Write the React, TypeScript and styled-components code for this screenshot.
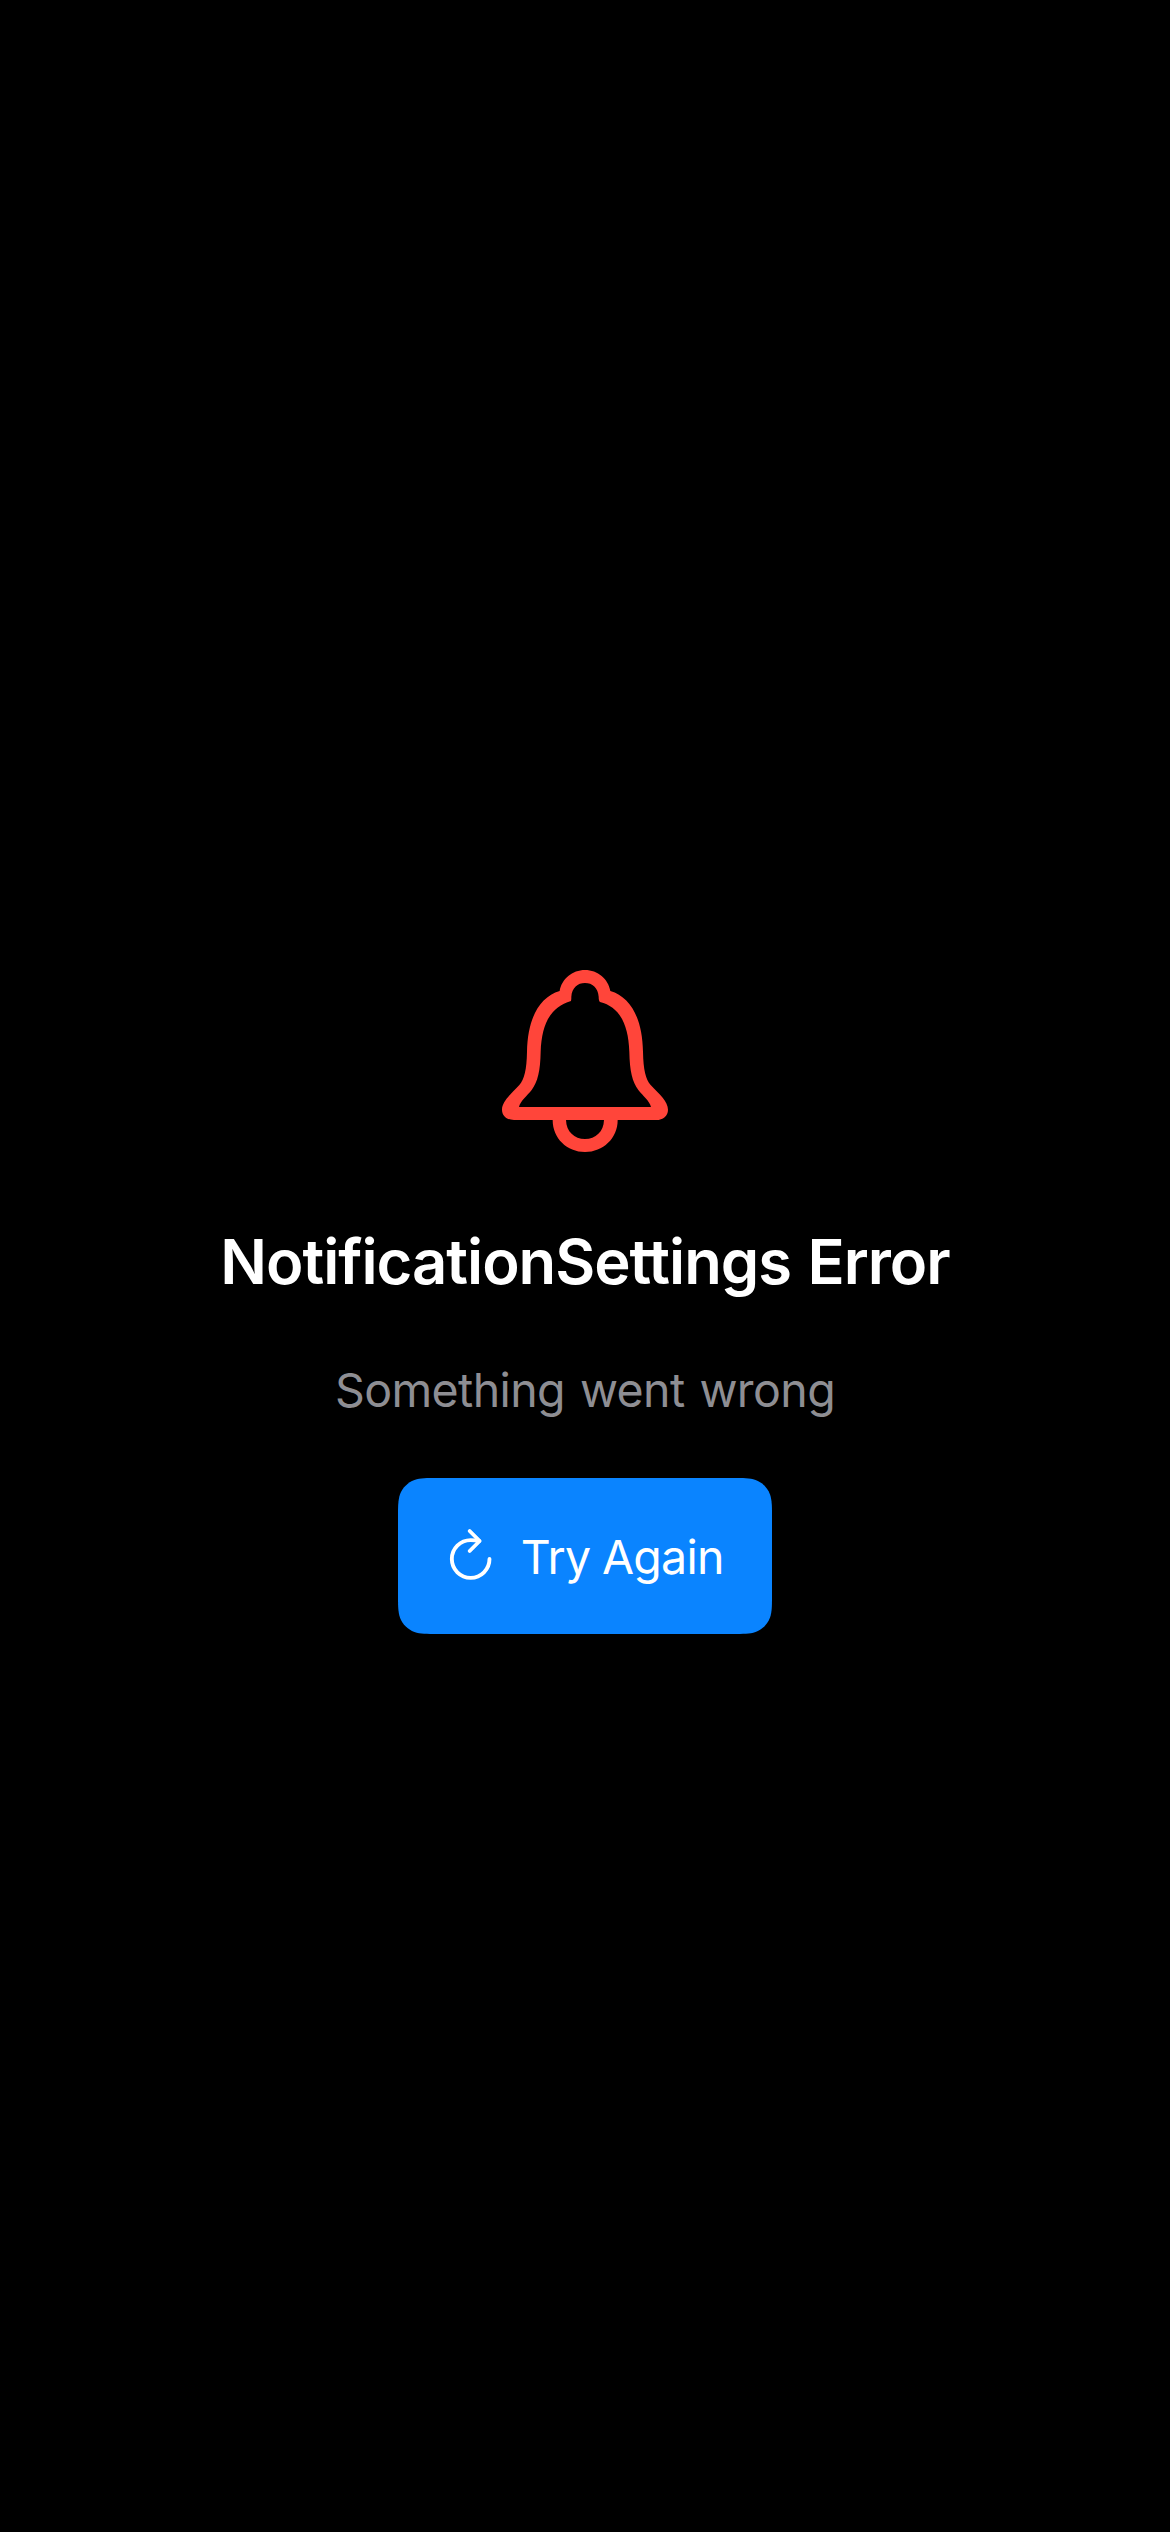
import React from "react";
import styled, { createGlobalStyle } from "styled-components";

/* Outline of a rectangle whose corners ease into the edges (continuous corners). */
function continuousRect(w: number, h: number, r: number): string {
  const a = 1.52866 * r;
  const b = 1.08849 * r;
  const c = 0.86841 * r;
  const d = 0.63149 * r;
  const e = 0.07491 * r;
  const f = 0.37282 * r;
  const g = 0.16906 * r;
  return [
    `M${a} 0H${w - a}`,
    `C${w - b} 0 ${w - c} 0 ${w - d} ${e}`,
    `C${w - f} ${g} ${w - g} ${f} ${w - e} ${d}`,
    `C${w} ${c} ${w} ${b} ${w} ${a}V${h - a}`,
    `C${w} ${h - b} ${w} ${h - c} ${w - e} ${h - d}`,
    `C${w - g} ${h - f} ${w - f} ${h - g} ${w - d} ${h - e}`,
    `C${w - c} ${h} ${w - b} ${h} ${w - a} ${h}H${a}`,
    `C${b} ${h} ${c} ${h} ${d} ${h - e}`,
    `C${f} ${h - g} ${g} ${h - f} ${e} ${h - d}`,
    `C0 ${h - c} 0 ${h - b} 0 ${h - a}V${a}`,
    `C0 ${b} 0 ${c} ${e} ${d}`,
    `C${g} ${f} ${f} ${g} ${d} ${e}`,
    `C${c} 0 ${b} 0 ${a} 0Z`,
  ].join("");
}

const GlobalStyle = createGlobalStyle`
  body { margin: 0; background: #000; }
`;

const Screen = styled.main`
  min-height: 2532px;
  box-sizing: border-box;
  padding-top: 970px;
  display: flex;
  flex-direction: column;
  align-items: center;
  background: #000;
  font-family: Inter, "Liberation Sans", sans-serif;
`;

const BellIcon = styled.svg`
  display: block;
  width: 166px;
  height: 182px;
  fill: #ff453a;
`;

const Title = styled.h1`
  margin: 70px 0 0;
  font-size: 61.5px;
  line-height: 79px;
  font-weight: 600;
  letter-spacing: -1px;
  word-spacing: 2px;
  color: #fff;
  white-space: nowrap;
`;

const Message = styled.p`
  margin: 59px 0 0;
  font-size: 46.5px;
  line-height: 60px;
  letter-spacing: -0.6px;
  word-spacing: 2.4px;
  color: #8e8e93;
  white-space: nowrap;
`;

const RetryButton = styled.button`
  margin: 58px 0 0;
  width: 374px;
  height: 156px;
  padding: 0 0 0 52px;
  border: 0;
  display: flex;
  align-items: center;
  gap: 29.5px;
  background: #0a84ff;
  clip-path: path("${continuousRect(374, 156, 26)}");
  color: #fff;
  font: inherit;
  font-size: 46.5px;
  line-height: 60px;
  white-space: nowrap;
`;

const RetryIcon = styled.svg`
  flex: none;
  display: block;
  width: 41.33px;
  height: 50.67px;
  margin-bottom: 2.6px;
  overflow: visible;
  fill: none;
  stroke: #fff;
  stroke-width: 11.6;
  stroke-linecap: round;
  stroke-linejoin: round;
`;

const RetryLabel = styled.span`
  padding-top: 2px;
  letter-spacing: -0.75px;
  word-spacing: -0.7px;
`;

export default function App() {
  return (
    <Screen>
      <GlobalStyle />
      <BellIcon viewBox="51 45 498 546" aria-hidden="true">
        <path
          fillRule="evenodd"
          d="M224 108C230 72 262 45 300 45C338 45 370 72 376 108C436 126 472 188 474 290C475 345 482 372 497 390C524 418 549 440 549 464C549 483 534 495 514 495H398C398 550 354 591 300 591C246 591 203 550 203 495H87C66 495 51 483 51 464C51 440 76 418 103 390C118 372 125 345 126 290C128 188 164 126 224 108Z
          M258 138C198 155 170 205 167 290C166 348 158 380 140 405C126 423 106 438 102 456H498C494 438 474 423 460 405C442 380 434 348 433 290C430 205 402 155 345 141C342 138 341 133 341 125C339 98 322 84 300 84C278 84 261 98 259 125C259 130 259 134 258 138Z
          M243 495C244 530 268 552 300 552C332 552 356 530 357 495Z"
        />
      </BellIcon>
      <Title>NotificationSettings Error</Title>
      <Message>Something went wrong</Message>
      <RetryButton type="button">
        <RetryIcon viewBox="180 193 124 152" aria-hidden="true">
          <path d="M298.5 283A56.5 56.5 0 1 1 242 226.500Q256 226.500 267 229" />
          <path d="M239 199L269 229L239 259" />
        </RetryIcon>
        <RetryLabel>Try Again</RetryLabel>
      </RetryButton>
    </Screen>
  );
}
